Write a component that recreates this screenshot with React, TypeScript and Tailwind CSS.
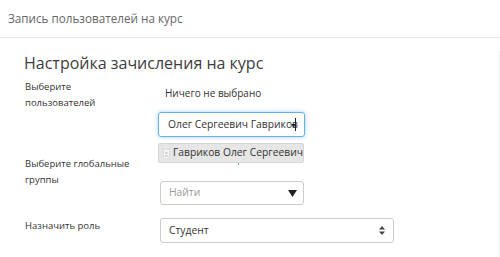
import React from "react";

function UserIcon() {
  return (
    <span className="inline-flex w-[9px] h-[10px] bg-[#f7f7f7] border border-[#dddddd] items-end justify-center overflow-hidden mr-[3px] mt-[2px]">
      <svg width="7" height="8" viewBox="0 0 7 8">
        <circle cx="3.5" cy="2.6" r="1.8" fill="#cfcfcf" />
        <path d="M0 8 C0 5 7 5 7 8 Z" fill="#cfcfcf" />
      </svg>
    </span>
  );
}

export default function App() {
  return (
    <div className="w-[500px] h-[257px] bg-white font-['Open_Sans',sans-serif] text-[#333] overflow-hidden">
      {/* Header */}
      <div className="h-[38px] border-b border-[#e8e8e8] pl-[8px] pt-[1px] flex items-center text-[11.7px] text-[#666]">
        Запись пользователей на курс
      </div>

      <div className="pl-[25px] border-r border-[#f0f0f0] h-[219px] w-[500px]">
        <h2 className="mt-[13px] text-[16px] leading-[24px] text-[#3d3d3d] -ml-[1px]">
          Настройка зачисления на курс
        </h2>

        {/* Users */}
        <div className="flex mt-[4px]">
          <div className="w-[133px] text-[9.5px] leading-[16px]">
            Выберите
            <br />
            пользователей
          </div>
          <div className="relative">
            <div className="mt-[6px] pl-[7px] text-[10px] leading-[16px]">Ничего не выбрано</div>
            <div className="mt-[11px] w-[147px] h-[25px] border border-[#66afe9] rounded-[3px] shadow-[0_0_4px_rgba(102,175,233,0.6)] flex items-center pl-[9px] pr-[6px] relative overflow-hidden">
              <span className="text-[10.3px] whitespace-nowrap overflow-hidden">Олег Сергеевич Гавриков</span>
              <span className="absolute right-[8px] top-[5px] w-[1px] h-[13px] bg-[#222]" />
              <span className="absolute right-[7px] top-[9px] text-[7px] leading-none text-[#222]">▼</span>
            </div>
            <div className="absolute top-[64px] left-0 w-[146px] h-[20px] bg-[#e6e6e6] border border-[#d6d6d6] rounded-[2px] flex items-center pl-[4px] text-[10.3px] whitespace-nowrap z-10">
              <UserIcon />
              Гавриков Олег Сергеевич
            </div>
          </div>
        </div>

        {/* Global groups */}
        <div className="flex mt-[19px]">
          <div className="w-[135px] text-[9.5px] leading-[16px]">
            Выберите глобальные
            <br />
            группы
          </div>
          <div className="relative">
            <span className="absolute left-[78px] top-[6px] w-[1px] h-[3px] bg-[#6aa8d8]" />
            <div className="mt-[25px] w-[144px] h-[24px] border border-[#ccc] rounded-[3px] flex items-center justify-between pl-[8px] pr-[6px]">
              <span className="text-[10.3px] text-[#999]">Найти</span>
              <svg width="9" height="7" viewBox="0 0 9 7">
                <path d="M0 0 H9 L4.5 7 Z" fill="#222" />
              </svg>
            </div>
          </div>
        </div>

        {/* Role */}
        <div className="flex mt-[13px]">
          <div className="w-[135px] text-[9.5px] leading-[16px]">Назначить роль</div>
          <div className="w-[234px] h-[25px] border border-[#ccc] rounded-[3px] flex items-center justify-between pl-[8px] pr-[8px]">
            <span className="text-[10.3px]">Студент</span>
            <svg width="6" height="9" viewBox="0 0 6 9">
              <path d="M0 3.5 L3 0 L6 3.5 Z M0 5.5 L3 9 L6 5.5 Z" fill="#444" />
            </svg>
          </div>
        </div>
      </div>
    </div>
  );
}
